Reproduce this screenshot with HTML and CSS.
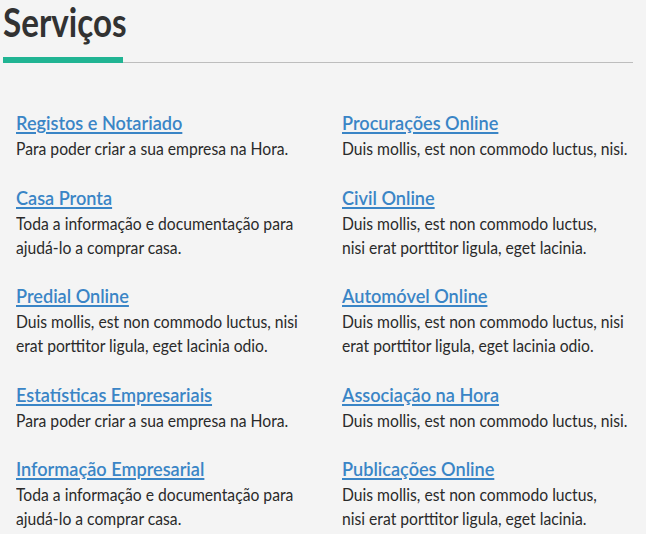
FILE: index.html
```html
<!DOCTYPE html>
<html lang="pt">
<head>
<meta charset="utf-8">
<title>Serviços</title>
<link rel="stylesheet" href="styles.css">
</head>
<body>
<section class="services">
  <header class="services-head">
    <h1 class="services-title">Serviços</h1>
    <div class="services-rule"><span class="rule-accent"></span><span class="rule-line"></span></div>
  </header>
  <div class="services-grid">
    <div class="service"><a class="service-link" href="#">Registos e Notariado</a><p class="service-desc">Para poder criar a sua empresa na Hora.</p></div>
    <div class="service"><a class="service-link" href="#">Procurações Online</a><p class="service-desc">Duis mollis, est non commodo luctus, nisi.</p></div>
    <div class="service"><a class="service-link" href="#">Casa Pronta</a><p class="service-desc">Toda a informação e documentação para<br>ajudá-lo a comprar casa.</p></div>
    <div class="service"><a class="service-link" href="#">Civil Online</a><p class="service-desc">Duis mollis, est non commodo luctus,<br>nisi erat porttitor ligula, eget lacinia.</p></div>
    <div class="service"><a class="service-link" href="#">Predial Online</a><p class="service-desc">Duis mollis, est non commodo luctus, nisi<br>erat porttitor ligula, eget lacinia odio.</p></div>
    <div class="service"><a class="service-link" href="#">Automóvel Online</a><p class="service-desc">Duis mollis, est non commodo luctus, nisi<br>erat porttitor ligula, eget lacinia odio.</p></div>
    <div class="service"><a class="service-link" href="#">Estatísticas Empresariais</a><p class="service-desc">Para poder criar a sua empresa na Hora.</p></div>
    <div class="service"><a class="service-link" href="#">Associação na Hora</a><p class="service-desc">Duis mollis, est non commodo luctus, nisi.</p></div>
    <div class="service"><a class="service-link" href="#">Informação Empresarial</a><p class="service-desc">Toda a informação e documentação para<br>ajudá-lo a comprar casa.</p></div>
    <div class="service"><a class="service-link" href="#">Publicações Online</a><p class="service-desc">Duis mollis, est non commodo luctus,<br>nisi erat porttitor ligula, eget lacinia.</p></div>
  </div>
</section>
</body>
</html>
```
FILE: styles.css
```css
html, body {
  margin: 0;
  padding: 0;
  background: #f4f4f4;
}
body {
  font-family: Lato, "Open Sans", sans-serif;
  color: #2a2a2a;
}
.services {
  width: 630px;
  padding: 2px 0 0 3px;
}
.services-title {
  display: inline-block;
  margin: 0;
  font-size: 40px;
  line-height: 40px;
  font-weight: 700;
  color: #323232;
  transform: scaleX(0.83);
  transform-origin: left center;
}
.services-rule {
  display: flex;
  align-items: flex-end;
  margin-top: 15px;
}
.rule-accent {
  width: 120px;
  height: 6px;
  background: #20b493;
}
.rule-line {
  flex: 1;
  height: 1px;
  background: #bdbdbd;
}
.services-grid {
  display: grid;
  grid-template-columns: 326px 1fr;
  row-gap: 24.5px;
  padding: 48px 0 0 13px;
}
.service-link {
  display: inline-block;
  font-size: 19px;
  line-height: 24px;
  font-weight: 600;
  color: #3a85c6;
  text-decoration: underline;
  text-decoration-thickness: 1.5px;
  text-underline-offset: 2px;
  transform: scaleX(0.954);
  transform-origin: left center;
}
.service-desc {
  margin: 2px 0 0;
  font-size: 17.5px;
  line-height: 24px;
  color: #2a2a2a;
  transform: scaleX(0.896);
  transform-origin: left center;
  white-space: nowrap;
}
```
